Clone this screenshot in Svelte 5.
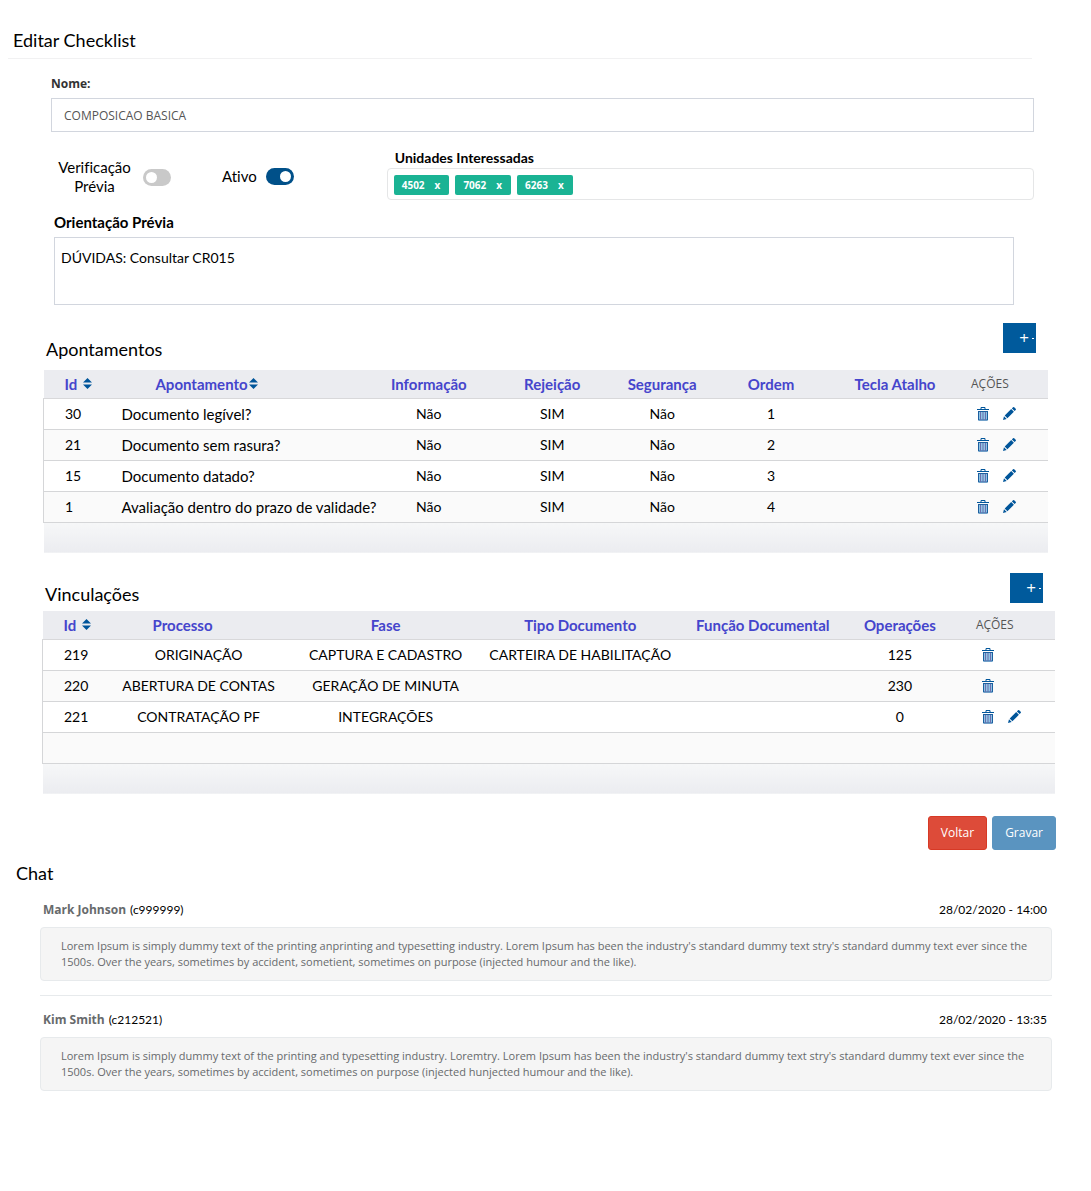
<script>
  let name = $state('COMPOSICAO BASICA');
  let previousCheck = $state(false);
  let active = $state(true);
  let guidance = $state('DÚVIDAS: Consultar CR015');
  let units = $state(['4502', '7062', '6263']);

  const noteColumns = [
    { label: 'Id', width: 60, kind: 'id', sort: true },
    { label: 'Apontamento', width: 267, kind: 'lead', sort: true },
    { label: 'Informação', width: 117 },
    { label: 'Rejeição', width: 130 },
    { label: 'Segurança', width: 90 },
    { label: 'Ordem', width: 128 },
    { label: 'Tecla Atalho', width: 120 },
    { label: 'AÇÕES', width: 93, kind: 'actions' }
  ];
  const noteRows = [
    { cells: ['30', 'Documento legível?', 'Não', 'SIM', 'Não', '1', ''], remove: true, edit: true },
    { cells: ['21', 'Documento sem rasura?', 'Não', 'SIM', 'Não', '2', ''], remove: true, edit: true },
    { cells: ['15', 'Documento datado?', 'Não', 'SIM', 'Não', '3', ''], remove: true, edit: true },
    { cells: ['1', 'Avaliação dentro do prazo de validade?', 'Não', 'SIM', 'Não', '4', ''], remove: true, edit: true }
  ];

  const linkColumns = [
    { label: 'Id', width: 58, kind: 'id', sort: true },
    { label: 'Processo', width: 196, kind: 'process' },
    { label: 'Fase', width: 178 },
    { label: 'Tipo Documento', width: 211 },
    { label: 'Função Documental', width: 154 },
    { label: 'Operações', width: 120 },
    { label: 'AÇÕES', width: 95, kind: 'actions' }
  ];
  const linkRows = [
    { cells: ['219', 'ORIGINAÇÃO', 'CAPTURA E CADASTRO', 'CARTEIRA DE HABILITAÇÃO', '', '125'], remove: true },
    { cells: ['220', 'ABERTURA DE CONTAS', 'GERAÇÃO DE MINUTA', '', '', '230'], remove: true },
    { cells: ['221', 'CONTRATAÇÃO PF', 'INTEGRAÇÕES', '', '', '0'], remove: true, edit: true },
    { cells: ['', '', '', '', '', ''] }
  ];

  const messages = [
    {
      author: 'Mark Johnson',
      code: '(c999999)',
      date: '28/02/2020 - 14:00',
      text: "Lorem Ipsum is simply dummy text of the printing anprinting and typesetting industry. Lorem Ipsum has been the industry's standard dummy text stry's standard dummy text ever since the 1500s. Over the years, sometimes by accident, sometient, sometimes on purpose (injected humour and the like)."
    },
    {
      author: 'Kim Smith',
      code: '(c212521)',
      date: '28/02/2020 - 13:35',
      text: "Lorem Ipsum is simply dummy text of the printing and typesetting industry. Loremtry. Lorem Ipsum has been the industry's standard dummy text stry's standard dummy text ever since the 1500s. Over the years, sometimes by accident, sometimes on purpose (injected hunjected humour and the like)."
    }
  ];

  const total = (columns) => columns.reduce((sum, c) => sum + c.width, 0);
</script>

{#snippet grid(columns, rows, title)}
  <table aria-label={title}>
    <colgroup>
      {#each columns as column}
        <col style="width: {(column.width / total(columns)) * 100}%" />
      {/each}
    </colgroup>
    <thead>
      <tr>
        {#each columns as column}
          <th scope="col" class={column.kind}>
            {#if column.sort}
              <button type="button" class="sort">
                {column.label}
                <svg width="9" height="11" viewBox="0 0 9 11" aria-hidden="true">
                  <path d="M4.5 0 9 4.6H0zM0 6.4h9L4.500 11z" fill="#00559a" />
                </svg>
              </button>
            {:else}
              {column.label}
            {/if}
          </th>
        {/each}
      </tr>
    </thead>
    <tbody>
      {#each rows as row}
        <tr>
          {#each row.cells as cell, i}
            <td class={columns[i].kind}>{cell}</td>
          {/each}
          <td class="actions">
            <div class="tools">
              {#if row.remove}
                <button type="button" class="icon" aria-label="Excluir">
                  <svg width="12" height="14" viewBox="0 0 12 14" aria-hidden="true">
                    <path d="M4 2V.5h4V2" fill="none" stroke="#00559a" />
                    <path d="M0 2h12v1H0z" fill="#00559a" />
                    <path d="M1 4h10v9.500H1z" fill="#8fc4e4" />
                    <path d="M1.500 4v9h9V4M1 4.500h10" fill="none" stroke="#1d5f9f" />
                    <path d="M3.500 5v8M6 5v8M8.500 5v8" fill="none" stroke="#6a6fae" />
                  </svg>
                </button>
              {/if}
              {#if row.edit}
                <button type="button" class="icon" aria-label="Editar">
                  <svg width="13" height="13" viewBox="0 0 13 13" aria-hidden="true">
                    <path d="M0 13 1 9.300 3.700 12zM1.700 8.600 8.200 2.100 10.900 4.800 4.400 11.300zM8.900 1.400 10 .3Q10.600-.2 11.200.3L12.700 1.800Q13.200 2.400 12.700 3L11.600 4.100z" fill="#00559a" />
                  </svg>
                </button>
              {/if}
            </div>
          </td>
        </tr>
      {/each}
    </tbody>
    <tfoot>
      <tr><td colspan={columns.length}></td></tr>
    </tfoot>
  </table>
{/snippet}

<main>
  <h1>Editar Checklist</h1>

  <form onsubmit={(e) => e.preventDefault()}>
    <div class="name">
      <label for="name">Nome:</label>
      <input id="name" type="text" bind:value={name} />
    </div>

    <div class="options">
      <label class="switch first">
        <span>Verificação Prévia</span>
        <input type="checkbox" bind:checked={previousCheck} />
      </label>
      <label class="switch">
        <span>Ativo</span>
        <input type="checkbox" bind:checked={active} />
      </label>
      <div class="units">
        <h2 id="units">Unidades Interessadas</h2>
        <div class="tags" role="group" aria-labelledby="units">
          {#each units as unit}
            <span class="tag">
              {unit}
              <button type="button" aria-label="Remover {unit}" onclick={() => (units = units.filter((u) => u !== unit))}>x</button>
            </span>
          {/each}
        </div>
      </div>
    </div>

    <div class="guidance">
      <label for="guidance">Orientação Prévia</label>
      <textarea id="guidance" bind:value={guidance}></textarea>
    </div>

    <section class="notes">
      <header>
        <h2>Apontamentos</h2>
        <button type="button" class="add" aria-label="Adicionar apontamento">+</button>
      </header>
      {@render grid(noteColumns, noteRows, 'Apontamentos')}
    </section>

    <section class="links">
      <header>
        <h2>Vinculações</h2>
        <button type="button" class="add" aria-label="Adicionar vinculação">+</button>
      </header>
      {@render grid(linkColumns, linkRows, 'Vinculações')}
    </section>

    <div class="buttons">
      <button type="button" class="back">Voltar</button>
      <button type="submit" class="save">Gravar</button>
    </div>
  </form>

  <section class="chat">
    <h2>Chat</h2>
    {#each messages as message}
      <article>
        <header>
          <strong>{message.author}</strong>
          <span>{message.code}</span>
          <time>{message.date}</time>
        </header>
        <p>{message.text}</p>
      </article>
    {/each}
  </section>
</main>

<style>
  :global(body) {
    margin: 0;
    background: #fff;
  }

  main {
    box-sizing: border-box;
    padding: 24px 35px 100px 8px;
    color: #000;
    font: 14px/20px Lato, 'Open Sans', sans-serif;
    font-variant-ligatures: none;
  }

  main :global(*) {
    box-sizing: border-box;
  }

  h1,
  h2 {
    margin: 0;
    font-size: 18px;
    line-height: 24px;
    font-weight: 400;
  }

  button,
  input,
  textarea {
    margin: 0;
    font: inherit;
    color: inherit;
  }

  button {
    padding: 0;
    border: 0;
    background: none;
    cursor: pointer;
  }

  h1 {
    margin-right: 24px;
    padding: 4px 5px 6px;
    border-bottom: 1px solid #f1f1f2;
  }

  .name {
    margin: 15px 22px 0 43px;
  }

  .name label {
    display: block;
    margin-bottom: 4px;
    color: #333;
    font: 700 12px/20px 'Open Sans', sans-serif;
  }

  .name input {
    display: block;
    width: 100%;
    height: 34px;
    padding: 0 12px;
    border: 1px solid #d2d6de;
    color: #555;
    font-family: 'Open Sans', sans-serif;
    font-size: 12px;
  }

  .options {
    display: flex;
    align-items: flex-start;
    margin: 16px 22px 0 47px;
  }

  .switch {
    display: flex;
    align-items: center;
    gap: 9px;
    margin-top: 19px;
    font-size: 15px;
    line-height: 19px;
    text-align: center;
  }

  .switch.first {
    width: 167px;
    margin-top: 10px;
  }

  .switch.first span {
    width: 79px;
  }

  .switch input {
    appearance: none;
    width: 28px;
    height: 17px;
    padding: 3px;
    border-radius: 9px;
    background: #c9c9c9;
  }

  .switch input::before {
    content: '';
    display: block;
    width: 11px;
    height: 11px;
    border-radius: 50%;
    background: #fff;
  }

  .switch input:checked {
    background: #005089;
  }

  .switch input:checked::before {
    margin-left: auto;
  }

  .units {
    flex: 1;
    margin-left: 93px;
  }

  .units h2 {
    padding-left: 8px;
    font-size: 14px;
    line-height: 20px;
    font-weight: 700;
  }

  .tags {
    display: flex;
    gap: 6px;
    height: 32px;
    padding: 6px;
    border: 1px solid #e5e6e7;
    border-radius: 4px;
  }

  .tag {
    display: flex;
    gap: 10px;
    height: 20px;
    padding: 0 9px 0 8px;
    border-radius: 2px;
    background: #1ab394;
    color: #fff;
    font: 700 10px/20px 'Open Sans', sans-serif;
  }

  .guidance {
    margin: 12px 42px 0 46px;
  }

  .guidance label {
    display: block;
    margin-bottom: 5px;
    font-size: 15px;
    font-weight: 700;
  }

  .guidance textarea {
    display: block;
    width: 100%;
    height: 68px;
    padding: 10px 6px;
    border: 1px solid #d2d6de;
    resize: none;
  }

  .notes {
    margin: 18px 8px 0 35px;
  }

  .links {
    margin: 20px 1px 0 34px;
  }

  section header {
    display: flex;
    justify-content: space-between;
  }

  .notes header,
  .links header {
    padding: 0 12px 0 3px;
  }

  .notes h2 {
    margin: 14px 0 9px;
  }

  .links h2 {
    margin: 9px 0 5px;
  }

  .add {
    display: flex;
    align-items: center;
    justify-content: flex-end;
    gap: 3px;
    width: 33px;
    height: 30px;
    padding-right: 2px;
    background: #005a9c;
    color: #fff;
    font: 17px/30px 'Open Sans', sans-serif;
  }

  .add::after {
    content: '';
    width: 2px;
    height: 1px;
    background: #fff;
  }

  table {
    width: 100%;
    table-layout: fixed;
    border-collapse: collapse;
  }

  th,
  td {
    padding: 0;
    text-align: center;
    white-space: nowrap;
  }

  th {
    height: 28px;
    border-bottom: 1px solid #d8d8da;
    background: #ebecf0;
    color: #4545cc;
    font-size: 15px;
    font-weight: 700;
  }

  td {
    height: 31px;
    border-bottom: 1px solid #d5d6d8;
  }

  tbody {
    border-left: 1px solid #d5d6d8;
  }

  tbody tr:nth-child(even) {
    background: #fafafa;
  }

  tfoot td {
    border: 0;
    background: linear-gradient(#f6f7f8, #ebecf0);
  }

  .id {
    padding-left: 21px;
    text-align: left;
  }

  .lead {
    padding-left: 18px;
    font-size: 15px;
    text-align: left;
  }

  th.lead {
    padding-left: 52px;
  }

  th.process {
    padding-right: 32px;
  }

  .sort {
    display: flex;
    align-items: center;
    gap: 6px;
  }

  .lead .sort {
    gap: 1px;
  }

  .actions {
    padding-left: 16px;
    text-align: left;
  }

  th.actions {
    color: #555;
    font: 400 12px/20px 'Open Sans', sans-serif;
  }

  .tools {
    display: flex;
    align-items: center;
    gap: 14px;
    padding-left: 6px;
  }

  .icon,
  .icon svg,
  .sort svg {
    display: block;
  }

  .buttons {
    display: flex;
    justify-content: flex-end;
    gap: 5px;
    margin-top: 22px;
  }

  .buttons button {
    height: 34px;
    padding: 0 12px;
    border: 1px solid #d73925;
    border-radius: 3px;
    background: #dd4b39;
    color: #fff;
    font-family: 'Open Sans', sans-serif;
    font-size: 12px;
  }

  .buttons .save {
    border-color: #5a94c0;
    background: #5a94c0;
  }

  .chat {
    margin-top: 11px;
  }

  .chat h2 {
    padding-left: 8px;
  }

  article {
    margin: 15px 4px 0 32px;
  }

  article + article {
    margin-top: 14px;
    padding-top: 14px;
    border-top: 1px solid #e7eaec;
  }

  article header {
    gap: 4px;
    padding: 0 5px 0 3px;
    font-size: 12px;
    line-height: 20px;
  }

  article strong {
    color: #676a6c;
    font: 700 12px/20px 'Open Sans', sans-serif;
  }

  time {
    margin-left: auto;
  }

  article p {
    margin: 7px 0 0;
    padding: 10px 20px;
    border: 1px solid #e7eaec;
    border-radius: 4px;
    background: #f5f5f5;
    color: #676a6c;
    font: 11px/16px 'Open Sans', sans-serif;
  }
</style>
